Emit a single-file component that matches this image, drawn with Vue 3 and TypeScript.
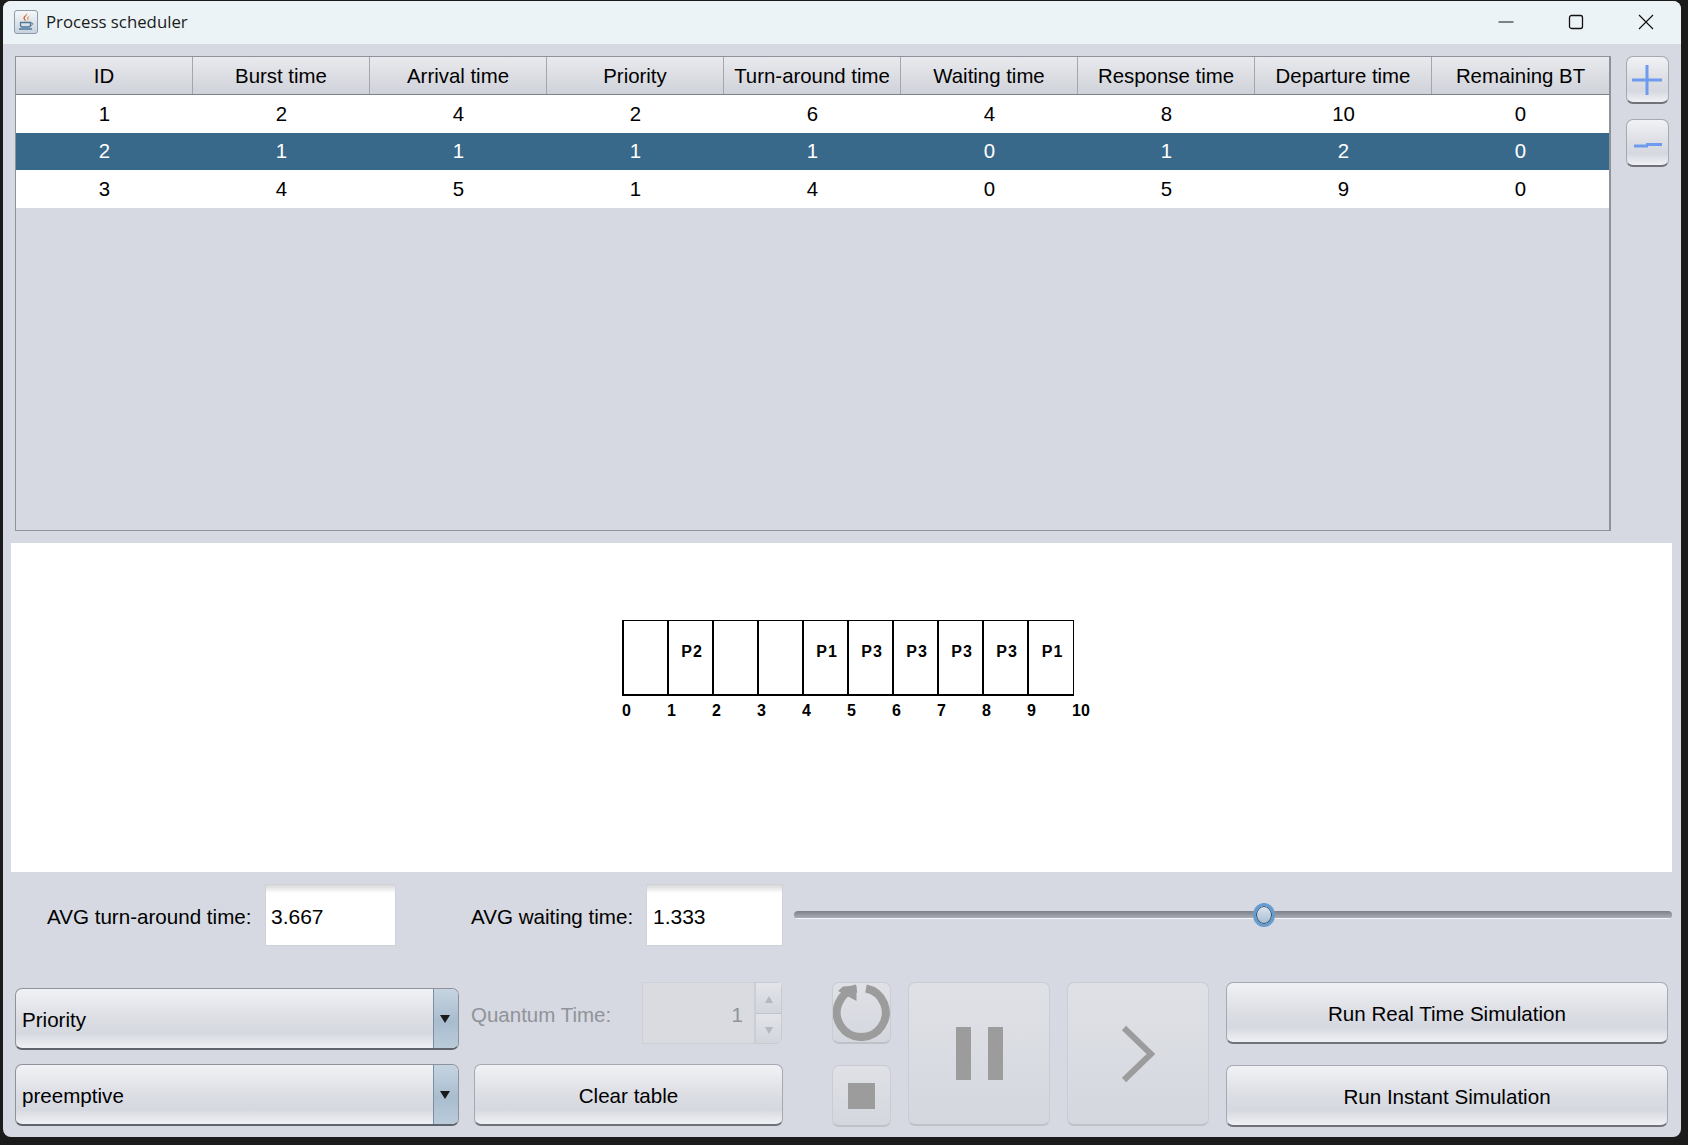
<script setup lang="ts">
interface Row {
  cells: number[];
  selected?: boolean;
}

const headers = [
  'ID',
  'Burst time',
  'Arrival time',
  'Priority',
  'Turn-around time',
  'Waiting time',
  'Response time',
  'Departure time',
  'Remaining BT',
];

const rows: Row[] = [
  { cells: [1, 2, 4, 2, 6, 4, 8, 10, 0] },
  { cells: [2, 1, 1, 1, 1, 0, 1, 2, 0], selected: true },
  { cells: [3, 4, 5, 1, 4, 0, 5, 9, 0] },
];

const slots = ['', 'P2', '', '', 'P1', 'P3', 'P3', 'P3', 'P3', 'P1'];
const ticks = [0, 1, 2, 3, 4, 5, 6, 7, 8, 9, 10];
</script>

<template>
  <div class="window">
    <header class="titlebar">
      <span class="app-icon">
        <svg width="22" height="22" viewBox="0 0 22 22">
          <path d="M12 2c1 2.500-3 3.500-2 6 .4 1 1 1.500 1.200 2.500-1.500-1-3.500-2.500-2.500-4.500.7-1.400 3-2 3.300-4z" fill="#d9622b" />
          <path d="M14.500 4.500c-1.500 1-3 2-2 4l.5 1.500c1-1.500-.5-3 1.500-5.500z" fill="#e58a3c" />
          <path d="M5.500 11.500h10v2.500c0 1-1 2-2 2h-6c-1 0-2-1-2-2z" fill="none" stroke="#4e7799" stroke-width="1.300" />
          <path d="M15.500 12h1.500c1.200 0 1 2.200-1.500 2.600" fill="none" stroke="#4e7799" />
          <path d="M4 18h13" stroke="#4e7799" stroke-width="1.300" />
        </svg>
      </span>
      <span class="title">Process scheduler</span>
      <div class="win-controls">
        <svg width="16" height="16" viewBox="0 0 16 16"><path d="M0.500 8h15" stroke="#111" /></svg>
        <svg width="16" height="16" viewBox="0 0 16 16"><rect x="1.500" y="1.500" width="13" height="13" rx="2" fill="none" stroke="#111" stroke-width="1.300" /></svg>
        <svg width="16" height="16" viewBox="0 0 16 16"><path d="M1 1l14 14M15 1L1 15" stroke="#111" stroke-width="1.200" /></svg>
      </div>
    </header>

    <section class="table-row">
      <div class="table">
        <div class="thead">
          <div v-for="h in headers" :key="h" class="th">{{ h }}</div>
        </div>
        <div
          v-for="(row, i) in rows"
          :key="i"
          class="tr"
          :class="{ selected: row.selected }"
        >
          <div v-for="(c, j) in row.cells" :key="j" class="td">{{ c }}</div>
        </div>
      </div>
      <div class="side-buttons">
        <button class="btn side">
          <svg class="plus" width="30" height="30" viewBox="0 0 30 30"><path d="M15 0v30M0 15h30" stroke="#6f9bee" stroke-width="3" /></svg>
        </button>
        <button class="btn side">
          <svg class="minus" width="28" height="8" viewBox="0 0 28 8"><path d="M0 5h14M12 3.500h16" stroke="#6f9bee" stroke-width="3" /></svg>
        </button>
      </div>
    </section>

    <section class="gantt">
      <div class="chart">
        <div class="slots">
          <div v-for="(s, i) in slots" :key="i" class="slot">{{ s }}</div>
        </div>
        <div class="ticks">
          <span v-for="t in ticks" :key="t" class="tick">{{ t }}</span>
        </div>
      </div>
    </section>

    <section class="stats">
      <label class="stat-label first">AVG turn-around time:</label>
      <div class="field first-field">3.667</div>
      <label class="stat-label second">AVG waiting time:</label>
      <div class="field second-field">1.333</div>
      <div class="slider">
        <div class="track"></div>
        <div class="thumb"></div>
      </div>
    </section>

    <section class="controls">
      <div class="left-block">
        <div class="combo first-combo">
          <span class="combo-text">Priority</span>
          <span class="combo-arrow"></span>
        </div>
        <div class="quantum">
          <span class="quantum-label">Quantum Time:</span>
          <div class="spinner">
            <span class="spin-value">1</span>
            <div class="spin-buttons">
              <span class="spin up"></span>
              <span class="spin down"></span>
            </div>
          </div>
        </div>
        <div class="combo">
          <span class="combo-text">preemptive</span>
          <span class="combo-arrow"></span>
        </div>
        <button class="btn text-btn">Clear table</button>
      </div>

      <div class="small-stack">
        <button class="btn disabled small">
          <svg width="57" height="57" viewBox="0 0 57 57">
            <path d="M33 4.500A24.500 24.500 0 1 1 23.500 4.500" fill="none" stroke="#9c9c9c" stroke-width="8" />
            <path d="M10 2.500l13.500-1V17L5 7z" fill="#9c9c9c" />
          </svg>
        </button>
        <button class="btn disabled small">
          <span class="stop"></span>
        </button>
      </div>

      <button class="btn disabled big">
        <span class="pause"></span>
        <span class="pause"></span>
      </button>
      <button class="btn disabled big">
        <svg width="34" height="58" viewBox="0 0 34 58"><path d="M3 3l27 26L3 55" fill="none" stroke="#9c9c9c" stroke-width="6" /></svg>
      </button>

      <div class="run-stack">
        <button class="btn text-btn">Run Real Time Simulation</button>
        <button class="btn text-btn">Run Instant Simulation</button>
      </div>
    </section>
  </div>
</template>

<style>
html,
body {
  margin: 0;
  background: #1b1b1b;
}
</style>

<style scoped>
.window {
  box-sizing: border-box;
  width: 1678px;
  height: 1136px;
  margin: 1px 0 0 3px;
  background: #d6d9e1;
  border-radius: 8px;
  overflow: hidden;
  font-family: 'Liberation Sans', Arial, sans-serif;
  color: #000;
}

.titlebar {
  display: flex;
  align-items: center;
  height: 43px;
  padding-bottom: 2px;
  box-sizing: border-box;
  background: #ecf3f6;
}
.app-icon {
  display: flex;
  align-items: center;
  justify-content: center;
  box-sizing: border-box;
  width: 24px;
  height: 24px;
  margin-left: 11px;
  border: 1px solid #8b9bab;
  border-radius: 3px;
  background: linear-gradient(#f6f7f9, #c8d2dd);
}
.title {
  margin-left: 8px;
  font-family: 'Open Sans', sans-serif;
  font-size: 16.800px;
  color: #1a1a1a;
}
.win-controls {
  display: flex;
  align-items: center;
  gap: 54px;
  margin-left: auto;
  margin-right: 27px;
}

.table-row {
  display: flex;
  align-items: flex-start;
  padding: 12px 0 0 12px;
  height: 487px;
  box-sizing: content-box;
}
.table {
  box-sizing: border-box;
  width: 1596px;
  height: 475px;
  border: 1px solid #8e929b;
  border-right-width: 2px;
}
.thead {
  display: grid;
  grid-template-columns: repeat(9, 177px);
  height: 38px;
  border-bottom: 1px solid #7e828a;
  box-sizing: border-box;
}
.th {
  display: flex;
  align-items: center;
  justify-content: center;
  box-sizing: border-box;
  padding-top: 2px;
  border-right: 1px solid #a3a6ad;
  background: linear-gradient(#e9eaee, #dcdee3 50%, #cfd2d9);
  font-size: 20.400px;
}
.th:last-child {
  border-right: 0;
}
.tr {
  display: grid;
  grid-template-columns: repeat(9, 177px);
  height: 37.500px;
  background: #fff;
}
.tr.selected {
  background: #39698a;
  color: #fff;
}
.td {
  display: flex;
  align-items: center;
  justify-content: center;
  padding-top: 1px;
  font-size: 20.400px;
}

.side-buttons {
  display: flex;
  flex-direction: column;
  gap: 15px;
  margin-left: 15px;
}
.plus {
  margin-right: 1px;
}
.minus {
  margin-top: 4px;
}

.btn {
  display: flex;
  align-items: center;
  justify-content: center;
  box-sizing: border-box;
  padding: 0;
  border: 1px solid #a6a9b1;
  border-bottom: 2px solid #6f7279;
  border-radius: 7px;
  background: linear-gradient(#f1f2f5, #dcdee4 50%, #d5d8df 75%, #f0f1f5);
  font-family: inherit;
  font-size: 20.600px;
  color: #000;
}
.btn.side {
  width: 43px;
  height: 48px;
}

.gantt {
  display: flex;
  justify-content: flex-start;
  box-sizing: border-box;
  width: 1661px;
  height: 329px;
  margin-left: 8px;
  padding: 77px 0 0 611px;
  background: #fff;
}
.slots {
  display: inline-flex;
  height: 76px;
  box-sizing: border-box;
  border: 1px solid #000;
  border-width: 1px 1px 2px 2px;
}
.slot {
  display: flex;
  justify-content: center;
  flex: none;
  width: 45px;
  box-sizing: border-box;
  padding: 22px 0 0 3px;
  border-right: 2px solid #000;
  font-size: 16px;
  font-weight: 700;
  letter-spacing: 1px;
}
.slot:last-child {
  border-right: 0;
  width: 44px;
}
.ticks {
  display: flex;
  margin-top: 4px;
}
.tick {
  flex: none;
  width: 45px;
  font-size: 16px;
  font-weight: 700;
}

.stats {
  display: flex;
  align-items: center;
  height: 74px;
  margin-top: 6px;
  font-size: 20.600px;
}
.stat-label {
  padding-top: 3px;
  white-space: nowrap;
}
.stat-label.first {
  width: 218px;
  margin-left: 44px;
}
.stat-label.second {
  width: 175px;
  margin-left: 75px;
}
.field {
  display: flex;
  align-items: center;
  box-sizing: border-box;
  height: 62px;
  padding: 3px 0 0 5px;
  background: linear-gradient(#d8d8d8, #fff 8px);
  border: 1px solid #cfd2d8;
  font-size: 21px;
}
.first-field {
  width: 131px;
}
.second-field {
  width: 137px;
  padding-left: 6px;
}
.slider {
  position: relative;
  width: 878px;
  height: 24px;
  margin-left: 11px;
}
.track {
  position: absolute;
  top: 8px;
  left: 0;
  right: 0;
  height: 8px;
  border-radius: 4px;
  background: linear-gradient(#7d8088, #a9acb4 85%, #f4f5f8 85%);
}
.thumb {
  position: absolute;
  top: 0;
  left: 459px;
  box-sizing: border-box;
  width: 22px;
  height: 24px;
  border: 3px solid #659dd0;
  border-radius: 50%;
  background: linear-gradient(#dbe4ee, #a7bdd1);
  box-shadow: inset 0 0 0 1px #33475c;
}

.controls {
  display: flex;
  align-items: flex-start;
  margin-top: 30px;
  padding-left: 12px;
}
.left-block {
  display: grid;
  grid-template-columns: 444px 309px;
  grid-template-rows: 67px 62px;
  column-gap: 15px;
  row-gap: 15px;
}
.combo {
  display: flex;
  align-items: center;
  box-sizing: border-box;
  height: 62px;
  padding-left: 6px;
  border: 1px solid #8e929a;
  border-bottom: 2px solid #5f636b;
  border-radius: 7px;
  background: linear-gradient(#f1f2f5, #dcdee4 50%, #d5d8df 75%, #f0f1f5);
  font-size: 20.600px;
  overflow: hidden;
}
.first-combo {
  margin-top: 6px;
}
.combo-text {
  flex: 1;
  padding-top: 3px;
}
.combo-arrow {
  position: relative;
  width: 24px;
  height: 100%;
  background: linear-gradient(#c6d4e1, #a9bdcf 55%, #bacbda);
  border-left: 1px solid #7d8ea0;
}
.combo-arrow::after {
  content: '';
  position: absolute;
  top: 26px;
  left: 6px;
  border: 5.500px solid transparent;
  border-top: 8px solid #1a1a1a;
  border-bottom: 0;
}
.quantum {
  display: flex;
  align-items: flex-start;
  margin-left: -3px;
}
.quantum-label {
  width: 171px;
  margin-top: 21px;
  font-size: 20.500px;
  color: #90939a;
  white-space: nowrap;
}
.spinner {
  display: flex;
  width: 140px;
  height: 62px;
}
.spin-value {
  flex: 1;
  padding: 20px 11px 0 0;
  text-align: right;
  border: 1px solid #cdd0d7;
  background: #d9dbe1;
  color: #90939a;
  font-size: 20.500px;
}
.spin-buttons {
  display: flex;
  flex-direction: column;
  width: 27px;
  border: 1px solid #c8cbd2;
  border-radius: 0 6px 6px 0;
  box-sizing: border-box;
}
.spin {
  position: relative;
  flex: 1;
  background: linear-gradient(#e2e4e9, #d2d5dc);
}
.spin + .spin {
  border-top: 1px solid #c0c3ca;
}
.spin::after {
  content: '';
  position: absolute;
  left: 9px;
  top: 13px;
  border: 4px solid transparent;
}
.spin.up::after {
  border-top: 0;
  border-bottom: 7px solid #b5b8be;
}
.spin.down::after {
  border-bottom: 0;
  border-top: 7px solid #b5b8be;
}

.text-btn {
  width: 100%;
  height: 62px;
  padding-top: 2px;
}

.small-stack {
  display: flex;
  flex-direction: column;
  gap: 21px;
  margin-left: 49px;
}
.btn.disabled {
  border: 1px solid #c9ccd3;
  border-bottom: 2px solid #bec1c8;
  background: linear-gradient(#dfe1e6, #d4d7de);
  gap: 17px;
}
.btn.small {
  width: 59px;
  height: 62px;
}
.btn.big {
  width: 142px;
  height: 144px;
  margin-left: 17px;
}
.stop {
  width: 27px;
  height: 26px;
  background: #9c9c9c;
}
.pause {
  width: 15px;
  height: 53px;
  background: #9c9c9c;
}
.run-stack {
  display: flex;
  flex-direction: column;
  gap: 21px;
  width: 442px;
  margin-left: 17px;
}
</style>
